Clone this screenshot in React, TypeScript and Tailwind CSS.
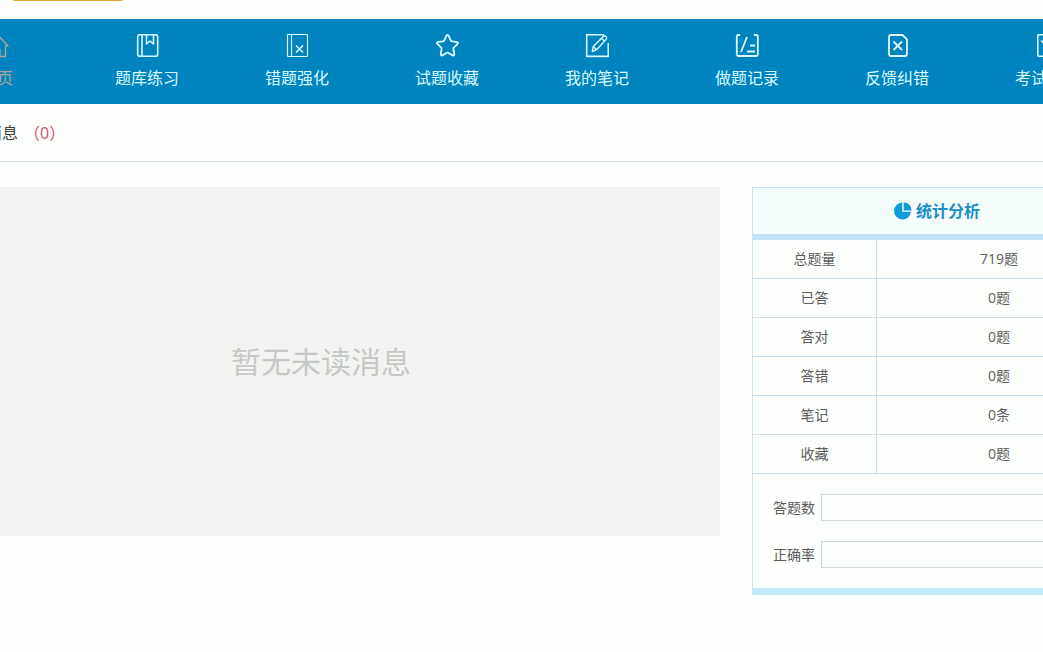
import type { ReactNode } from "react"

interface NavItem {
  label: string
  icon: ReactNode
  active?: boolean
}

const navItems: NavItem[] = [
  {
    label: "首页",
    active: true,
    icon: <path d="M12 0.500 1 11.700h2.500v10.800H9v-7h6v7h5.500V11.700H23z" strokeWidth="1.4" />,
  },
  {
    label: "题库练习",
    icon: (
      <>
        <rect x="2.700" y="0.700" width="20" height="21.600" rx="2" />
        <path d="M7 1v21M11.500 1v9l3.500-3 3.500 3V1" />
      </>
    ),
  },
  {
    label: "错题强化",
    icon: (
      <>
        <rect x="2.500" y="0.500" width="20" height="22" rx="1" strokeWidth="1.2" />
        <path d="M6.500 0.500v22" strokeWidth="1.2" />
        <path d="m11 11.500 7 7m0-7-7 7" />
      </>
    ),
  },
  {
    label: "试题收藏",
    icon: (
      <path
        d="M11.500 1.700q1-1.400 2 0l2.600 5.500 6 .9q1.500.4.5 1.700l-4.300 4.400 1 6.100q0 1.600-1.500 1.100l-5.300-2.900-5.300 2.900q-1.500.5-1.500-1.100l1-6.100L2.400 9.800q-1-1.300.5-1.700l6-.9z"
        strokeWidth="1.8"
      />
    ),
  },
  {
    label: "我的笔记",
    icon: (
      <>
        <path d="M19 0.800H1.700v21.600h21.600V9" />
        <path d="m7.300 17.500 1-5L18.500 2.300q1.200-1 2.500.2t.3 2.600L11.700 15.700zM16.500 4.300l3 3M8.300 12.500l3.400 3.200" strokeWidth="1.4" />
      </>
    ),
  },
  {
    label: "做题记录",
    icon: (
      <path
        d="M5 1H3Q1.800 1 1.800 2.200V20.500q0 1.500 1.500 1.500h18q1.500 0 1.500-1.500V2.200Q22.800 1 21.500 1H19M12 3 6 18M15 11.500h5M12 17.500h8"
        strokeWidth="1.8"
      />
    ),
  },
  {
    label: "反馈纠错",
    icon: (
      <path
        d="M6 1h11.500l4.500 4.500v14.500q0 2-2 2H6q-2 0-2-2V3q0-2 2-2zM8.500 7.500l8.500 8.500m0-8.500-8.500 8.500"
        strokeWidth="1.8"
      />
    ),
  },
  {
    label: "考试记录",
    icon: (
      <>
        <rect x="2.800" y="0.800" width="19" height="21.500" rx="1" />
        <path d="m6 6.500 6 5.500 6-5.500M12 12v6" />
      </>
    ),
  },
]

const stats = [
  { name: "总题量", value: "719题" },
  { name: "已答", value: "0题" },
  { name: "答对", value: "0题" },
  { name: "答错", value: "0题" },
  { name: "笔记", value: "0条" },
  { name: "收藏", value: "0题" },
]

const progress = [
  { id: "answered", label: "答题数" },
  { id: "accuracy", label: "正确率" },
]

function Nav() {
  return (
    <nav className="bg-[#0083bf]">
      <div className="-ml-[78px] -mr-[79px] grid grid-cols-8">
        {navItems.map((item) => (
          <a
            key={item.label}
            href="#"
            className={`flex h-[85px] flex-col items-center gap-2 pt-[15px] ${
              item.active ? "text-[#a9a794]" : "text-[#d8fcff]"
            }`}
          >
            <svg
              viewBox="0 0 24 24"
              className="size-6"
              fill="none"
              stroke="currentColor"
              strokeWidth="1.6"
              strokeLinejoin="round"
              aria-hidden="true"
            >
              {item.icon}
            </svg>
            <span className="text-base leading-6">{item.label}</span>
          </a>
        ))}
      </div>
    </nav>
  )
}

function StatsPanel() {
  return (
    <section className="w-[370px] shrink-0 border border-b-[7px] border-[#c9e4f2] border-b-[#c3e8f6]">
      <h2 className="flex h-[52px] items-center justify-center gap-1 border-b-[6px] border-[#c3e4f4] bg-[#f4fcfc] text-base font-bold text-[#1a8fc6]">
        <svg viewBox="0 0 18 18" className="size-[18px]" fill="#129bdb" aria-hidden="true">
          <path d="M8.200.5v9.300H17A8.500 8.500 0 1 1 8.200.5z" />
          <path d="M9.700.3a8 8 0 0 1 7.900 8.100H9.700z" />
        </svg>
        统计分析
      </h2>
      <table className="w-full table-fixed border-separate border-spacing-0 text-center text-sm text-[#5c5c5c]">
        <tbody>
          {stats.map((row) => (
            <tr key={row.name} className="h-[39px]">
              <th scope="row" className="w-[124px] border-r border-b border-[#c9e2ee] p-0 font-normal">
                {row.name}
              </th>
              <td className="border-b border-[#c9e2ee] p-0">{row.value}</td>
            </tr>
          ))}
        </tbody>
      </table>
      <div className="flex flex-col gap-5 p-5">
        {progress.map((bar) => (
          <div key={bar.id} className="flex items-center gap-1.5 text-sm text-[#5c5c5c]">
            <span id={bar.id}>{bar.label}</span>
            <div
              role="progressbar"
              aria-labelledby={bar.id}
              aria-valuenow={0}
              className="h-[27px] flex-1 border border-[#d3d9d9]"
            />
          </div>
        ))}
      </div>
    </section>
  )
}

export default function App() {
  return (
    <div className="min-h-screen overflow-x-clip bg-[#fdfffd] font-['Open_Sans','Noto_Sans_CJK_SC',sans-serif]">
      <header className="h-[19px] overflow-hidden pl-2">
        <div className="-mt-[39px] h-10 w-[120px] rounded-lg border-2 border-[#dfa636]" />
      </header>
      <Nav />
      <div className="border-b border-[#dde1e1]">
        <div className="-ml-[46px] flex h-[57px] items-center gap-1.5 text-base text-[#444]">
          <h1>未读消息</h1>
          <span className="text-[#c45468]">（0）</span>
        </div>
      </div>
      <main className="-ml-[78px] -mr-[79px] flex items-start gap-8 pt-[25px]">
        <div className="flex h-[349px] flex-1 items-center justify-center bg-[#f3f4f2] text-3xl text-[#c5c9c5]">
          暂无未读消息
        </div>
        <StatsPanel />
      </main>
    </div>
  )
}
